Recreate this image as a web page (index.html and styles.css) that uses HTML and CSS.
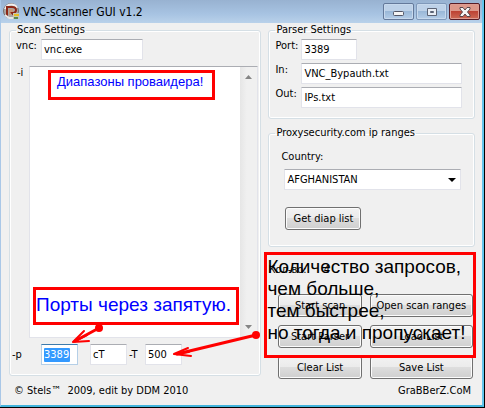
FILE: index.html
```html
<!DOCTYPE html>
<html lang="en">
<head>
  <meta charset="UTF-8">
  <meta name="viewport" content="width=device-width, initial-scale=1.0">
  <title>VNC-scanner GUI v1.2</title>
  <link rel="stylesheet" href="styles.css">
</head>
<body>
  <div class="window">
    <header class="titlebar">
      <svg class="app-icon" width="17" height="17" viewBox="0 0 17 17">
        <circle cx="8" cy="8" r="7.5" fill="#aaa6a5" stroke="#77706e"/>
        <path d="M2 6Q4 1 9 1.500Q13 2 14 5" fill="none" stroke="#f0eeee" stroke-width="2"/>
        <path d="M4 13V4H9Q13 4 13 7Q13 10 9 10L13 14" fill="none" stroke="#8d2817" stroke-width="2"/>
        <path d="M7 6V12M9 6V9" stroke="#e08a50" stroke-width="1"/>
        <path d="M2 12L6 15H10" fill="none" stroke="#e6e6e6" stroke-width="2"/>
        <path d="M10 10H16V16H10Z" fill="#c7c8b4"/>
        <path d="M11 12H16" stroke="#e7bd24" stroke-width="2"/>
        <path d="M11 15H15" stroke="#58884d" stroke-width="2"/>
      </svg>
      <h1>VNC-scanner GUI v1.2</h1>
      <div class="window-buttons">
        <button type="button" class="win-btn" aria-label="Minimize">
          <svg width="12" height="12" viewBox="0 0 12 12"><rect x="0.500" y="5.500" width="10" height="4" rx="1" fill="#f4f4f4" stroke="#535666"/></svg>
        </button>
        <button type="button" class="win-btn maximize" aria-label="Maximize">
          <svg width="12" height="12" viewBox="0 0 12 12"><path d="M1.500 2.500H10.500V9.500H1.500ZM4.500 5.500V6.500H7.500V5.500Z" fill="#e9eef5" fill-rule="evenodd" stroke="#5b6375"/></svg>
        </button>
        <button type="button" class="win-btn close" aria-label="Close">
          <svg width="12" height="12" viewBox="0 0 12 12"><path d="M1 1.500H4L6 4L8 1.500H11V3L8.500 6L11 9V10.500H8L6 8L4 10.500H1V9L3.500 6L1 3Z" fill="#f5f5f5" stroke="#59464a"/></svg>
        </button>
      </div>
    </header>

    <main class="content">
      <fieldset class="scan">
        <legend>Scan Settings</legend>
        <div class="row">
          <label class="side-label" for="vnc">vnc:</label>
          <input class="exe" type="text" id="vnc" value="vnc.exe">
        </div>
        <div class="ranges-row">
          <label for="ranges">-i</label>
          <div class="ranges-box">
            <textarea id="ranges"></textarea>
            <div class="scrollbar">
              <svg width="7" height="4" viewBox="0 0 7 4"><path d="M0 4L3.500 0L7 4Z" fill="#858585"/></svg>
              <svg width="7" height="4" viewBox="0 0 7 4"><path d="M0 0L3.500 4L7 0Z" fill="#858585"/></svg>
            </div>
            <p class="note note-ranges">Диапазоны проваидера!</p>
            <p class="note note-ports">Порты через запятую.</p>
          </div>
        </div>
        <div class="options">
          <label class="port-label" for="ports">-p</label>
          <span class="small-field selected"><input type="text" id="ports" value="3389"></span>
          <input class="small-field mode" type="text" aria-label="Mode" value="cT">
          <label class="t-label" for="threads">-T</label>
          <input class="small-field" type="text" id="threads" value="500">
        </div>
      </fieldset>

      <div class="side">
        <fieldset class="parser">
          <legend>Parser Settings</legend>
          <div class="row">
            <label for="port">Port:</label>
            <input class="port" type="text" id="port" value="3389">
          </div>
          <div class="row">
            <label for="in">In:</label>
            <input type="text" id="in" value="VNC_Bypauth.txt">
          </div>
          <div class="row">
            <label for="out">Out:</label>
            <input type="text" id="out" value="IPs.txt">
          </div>
        </fieldset>

        <fieldset class="proxy">
          <legend>Proxysecurity.com ip ranges</legend>
          <label for="country">Country:</label>
          <div class="select-box">
            <select id="country">
              <option>AFGHANISTAN</option>
            </select>
            <svg width="8" height="4" viewBox="0 0 8 4"><path d="M0 0H8L4 4Z" fill="#000"/></svg>
          </div>
          <button type="button" class="btn">Get diap list</button>
        </fieldset>

        <section class="actions">
          <p class="count"><span>Кол-во:</span><span>4</span></p>
          <div class="action-grid">
            <button type="button" class="btn">Start scan</button>
            <button type="button" class="btn">Open scan ranges</button>
            <button type="button" class="btn">Start Parser</button>
            <button type="button" class="btn">Load List</button>
            <button type="button" class="btn">Clear List</button>
            <button type="button" class="btn">Save List</button>
          </div>
          <p class="note note-count">Количество запросов,<br>чем больше,<br>тем быстрее,<br>но тогда и пропускает!</p>
        </section>
      </div>
    </main>

    <footer>
      <span>© Stels™&nbsp; 2009, edit by DDM 2010</span>
      <span>GraBBerZ.CoM</span>
    </footer>

    <svg class="arrows" viewBox="0 0 485 408" width="485" height="408">
      <g fill="none" stroke="#f00" stroke-width="3" stroke-linecap="round" stroke-linejoin="round">
        <path d="M98 328L74 341"/>
        <path d="M83 331L72 342L88 341M72 342L86 335" stroke-width="2"/>
        <path d="M255 335L176 354"/>
        <path d="M187 348L173 354L190 356M173 354L188 352" stroke-width="2"/>
      </g>
      <circle cx="98" cy="328" r="4" fill="#f00"/>
      <circle cx="255" cy="335" r="4" fill="#f00"/>
    </svg>
  </div>
</body>
</html>
```

FILE: styles.css
```css
* {
  box-sizing: border-box;
}

html {
  background-color: #000;
}

body {
  margin: 0;
  font-family: "DejaVu Sans Condensed", Tahoma, sans-serif;
  font-size: 11px;
  line-height: 14px;
  color: #000;
}

p, h1 {
  margin: 0;
}

.window {
  position: relative;
  margin-right: 1px;
  border: 1px solid #a9c7e7;
  border-top: 0;
  border-right: 2px solid #62c5ec;
  border-bottom: 2px solid #42b4dc;
  background-color: #f0f0f0;
}

.titlebar {
  display: flex;
  align-items: center;
  height: 23px;
  padding-left: 2px;
  gap: 3px;
  background: linear-gradient(#98b2d1, #a7c3e2 60%, #b9d1ea);
}

h1 {
  font-size: 12px;
  font-weight: normal;
}

.window-buttons {
  display: flex;
  align-self: flex-start;
  gap: 2px;
  margin: 3px 2px 0 auto;
}

.win-btn {
  display: flex;
  align-items: center;
  justify-content: center;
  width: 31px;
  height: 17px;
  padding: 0;
  border: 1px solid #64799a;
  border-radius: 2px;
  box-shadow: inset 0 0 0 1px #c7d9ed;
  background: linear-gradient(#bdd1e8 45%, #9ab8d8 50%, #b4cde8);
}

.win-btn.maximize {
  border-color: #8099ba;
}

.win-btn.close {
  border-color: #571d26;
  box-shadow: inset 0 0 0 1px #de9c91;
  background: linear-gradient(#dc988a 45%, #bd4334 50%, #cd6a55);
}

.content {
  display: grid;
  grid-template-columns: minmax(0, 253fr) minmax(0, 207fr);
  align-items: start;
  gap: 7px;
  padding: 0 7px 0 8px;
}

fieldset {
  min-width: 0;
  margin: 0;
  padding: 0;
  border: 1px solid #d5dfe5;
  border-radius: 3px;
  box-shadow: inset 0 0 0 1px #fff;
}

legend {
  margin-left: 6px;
  padding: 0 1px;
}

input, textarea, select, button {
  font: inherit;
  color: inherit;
}

input, select, .ranges-box {
  border: 1px solid #e2e3ea;
  border-top-color: #abadb3;
  border-radius: 1px;
  background-color: #fff;
}

input {
  min-width: 0;
  height: 21px;
  padding: 0 2px;
}

.row {
  display: flex;
}

.scan .row {
  padding: 2px 0 6px 6px;
}

.side-label {
  width: 25px;
}

.exe {
  width: 102px;
}

.ranges-row {
  display: flex;
  padding-right: 2px;
}

.ranges-row label {
  width: 19px;
  padding-left: 7px;
}

.ranges-box {
  position: relative;
  display: flex;
  flex: 1;
  height: 272px;
}

textarea {
  flex: 1;
  min-width: 0;
  border: 0;
  padding: 2px;
  resize: none;
  outline: 0;
}

.scrollbar {
  display: flex;
  flex-direction: column;
  align-items: center;
  justify-content: space-between;
  width: 17px;
  padding: 8px 0;
  background: linear-gradient(to right, #e6e6e6, #f0f0f0 40%);
}

.options {
  display: flex;
  align-items: center;
  padding: 6px 0 10px 2px;
}

.port-label {
  width: 29px;
}

.small-field {
  width: 37px;
}

.selected {
  display: flex;
  align-items: center;
  height: 21px;
  padding: 0 2px;
  border: 1px solid #b5cfe7;
  border-top-color: #3d7bad;
  background-color: #fff;
}

.selected input {
  width: 26px;
  height: 14px;
  padding: 0;
  border: 0;
  background-color: #39f;
  color: #fff;
}

.mode {
  margin-left: 12px;
}

.t-label {
  width: 18px;
  padding-left: 2px;
}

.side {
  display: flex;
  flex-direction: column;
}

.parser .row {
  padding: 0 12px 3px 6px;
}

.parser legend + .row {
  padding-top: 2px;
}

.parser label {
  width: 26px;
}

.parser input {
  flex: 1;
}

.parser .port {
  flex: none;
  width: 56px;
}

.parser {
  padding-bottom: 7px;
}

.proxy {
  margin-top: 7px;
  padding-bottom: 16px;
}

.proxy label {
  display: block;
  margin: 10px 0 5px 12px;
}

.select-box {
  position: relative;
  margin: 0 13px 17px 15px;
}

.select-box svg {
  position: absolute;
  right: 5px;
  top: 9px;
  pointer-events: none;
}

select {
  display: block;
  width: 100%;
  height: 21px;
  padding: 0 2px;
  appearance: none;
}

.proxy .btn {
  margin-left: 16px;
  width: 76px;
}

.btn {
  display: block;
  height: 23px;
  padding: 0;
  border: 1px solid #707070;
  border-radius: 3px;
  box-shadow: inset 0 0 0 1px #fcfcfc;
  background: linear-gradient(#f2f2f2, #ebebeb 49%, #ddd 50%, #cfcfcf);
  white-space: nowrap;
}

.actions {
  position: relative;
  padding: 16px 2px 0 0;
}

.count {
  display: flex;
  gap: 17px;
}

.action-grid {
  display: grid;
  grid-template-columns: 83fr 103fr;
  gap: 8px;
  padding: 17px 0 0 10px;
}

.note {
  position: absolute;
  border: 3px solid #f00;
  font-family: "Liberation Sans", Arial, sans-serif;
  white-space: nowrap;
  pointer-events: none;
}

.note-ranges {
  top: 3px;
  left: 18px;
  width: 167px;
  height: 30px;
  padding-left: 6px;
  font-size: 13px;
  line-height: 18px;
  color: #00f;
}

.note-ports {
  bottom: 12px;
  left: 3px;
  width: 206px;
  height: 38px;
  font-size: 19px;
  line-height: 30px;
  color: #00f;
}

.note-count {
  top: 5px;
  left: -4px;
  right: -1px;
  height: 106px;
  padding-top: 1px;
  font-size: 19px;
  line-height: 22px;
}

footer {
  display: flex;
  justify-content: space-between;
  padding: 5px 11px 7px 13px;
}

.arrows {
  position: absolute;
  top: 0;
  left: 0;
  pointer-events: none;
}
```
